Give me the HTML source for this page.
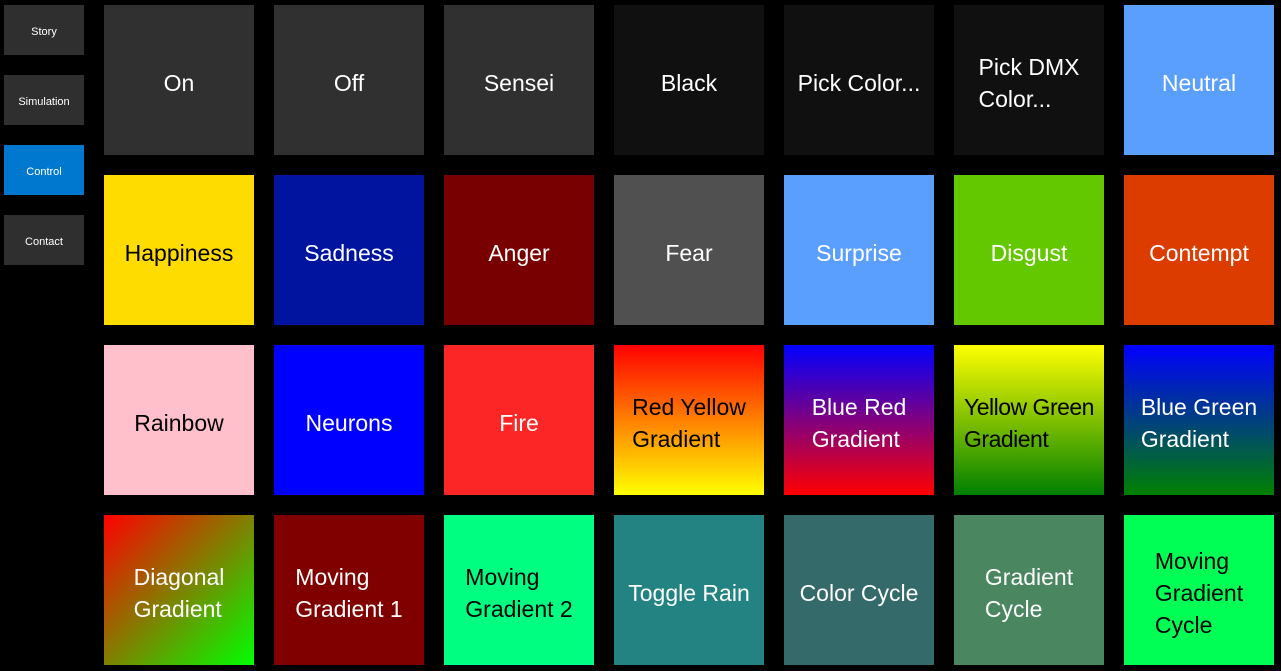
<!DOCTYPE html>
<html><head><style>
body{margin:0;background:#000;width:1281px;height:671px;overflow:hidden;font-family:"Segoe UI","Liberation Sans","DejaVu Sans",sans-serif;position:relative}
.nav{position:absolute;left:4px;width:80px;height:50px;background:#2f2f2f;color:#fff;font-size:11px;display:flex;align-items:center;justify-content:center;padding-top:3px;box-sizing:border-box}
.t{position:absolute;width:150px;height:150px;display:flex;align-items:center;justify-content:center;color:#fff;font-size:23px;line-height:32px;padding-top:5px;box-sizing:border-box}
.t span{display:block;max-width:146px;text-align:left;white-space:nowrap}
.k{color:#000}
</style></head><body>
<div class="nav" style="top:5px">Story</div>
<div class="nav" style="top:75px">Simulation</div>
<div class="nav" style="top:145px;background:#0078d0">Control</div>
<div class="nav" style="top:215px">Contact</div>

<div class="t" style="left:104px;top:5px;background:#303030"><span>On</span></div>
<div class="t" style="left:274px;top:5px;background:#303030"><span>Off</span></div>
<div class="t" style="left:444px;top:5px;background:#303030"><span>Sensei</span></div>
<div class="t" style="left:614px;top:5px;background:#101010"><span>Black</span></div>
<div class="t" style="left:784px;top:5px;background:#101010"><span>Pick Color...</span></div>
<div class="t" style="left:954px;top:5px;background:#101010"><span>Pick DMX<br>Color...</span></div>
<div class="t" style="left:1124px;top:5px;background:#5a9ffd"><span>Neutral</span></div>

<div class="t k" style="left:104px;top:175px;background:#ffdc00"><span>Happiness</span></div>
<div class="t" style="left:274px;top:175px;background:#0014a0"><span>Sadness</span></div>
<div class="t" style="left:444px;top:175px;background:#780000"><span>Anger</span></div>
<div class="t" style="left:614px;top:175px;background:#505050"><span>Fear</span></div>
<div class="t" style="left:784px;top:175px;background:#5a9ffd"><span>Surprise</span></div>
<div class="t" style="left:954px;top:175px;background:#64c800"><span>Disgust</span></div>
<div class="t" style="left:1124px;top:175px;background:#dc3c00"><span>Contempt</span></div>

<div class="t k" style="left:104px;top:345px;background:#ffc0cb"><span>Rainbow</span></div>
<div class="t" style="left:274px;top:345px;background:#0000ff"><span>Neurons</span></div>
<div class="t" style="left:444px;top:345px;background:#fc2626"><span>Fire</span></div>
<div class="t k" style="left:614px;top:345px;background:linear-gradient(#ff0000,#ffff00)"><span>Red Yellow<br>Gradient</span></div>
<div class="t" style="left:784px;top:345px;background:linear-gradient(#0000ff,#ff0000)"><span>Blue Red<br>Gradient</span></div>
<div class="t k" style="left:954px;top:345px;background:linear-gradient(#ffff00,#008000)"><span style="letter-spacing:-0.5px">Yellow Green<br>Gradient</span></div>
<div class="t" style="left:1124px;top:345px;background:linear-gradient(#0000ff,#008000)"><span>Blue Green<br>Gradient</span></div>

<div class="t" style="left:104px;top:515px;background:linear-gradient(135deg,#ff0000,#808000 50%,#00ff00)"><span>Diagonal<br>Gradient</span></div>
<div class="t" style="left:274px;top:515px;background:#800000"><span>Moving<br>Gradient 1</span></div>
<div class="t k" style="left:444px;top:515px;background:#00ff80"><span>Moving<br>Gradient 2</span></div>
<div class="t" style="left:614px;top:515px;background:#238383"><span>Toggle Rain</span></div>
<div class="t" style="left:784px;top:515px;background:#356a6a"><span>Color Cycle</span></div>
<div class="t" style="left:954px;top:515px;background:#4a8660"><span>Gradient<br>Cycle</span></div>
<div class="t k" style="left:1124px;top:515px;background:#00ff55"><span>Moving<br>Gradient<br>Cycle</span></div>
</body></html>
